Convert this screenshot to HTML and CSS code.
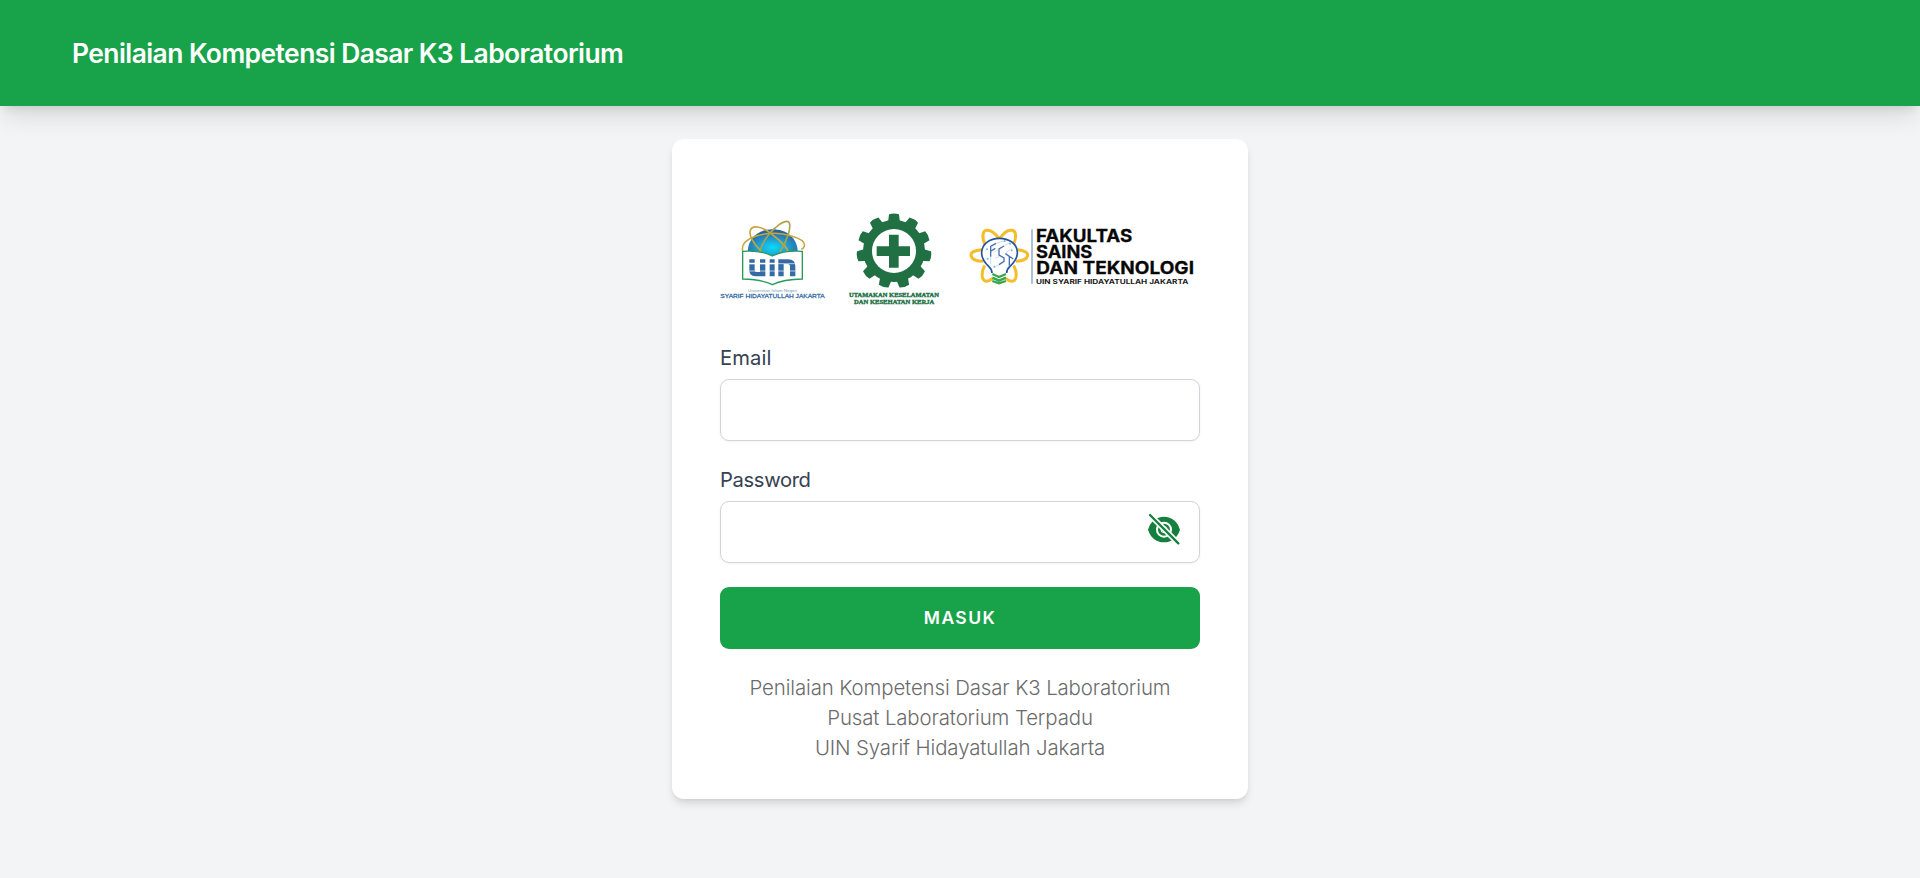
FILE: index.html
```html
<!DOCTYPE html>
<html lang="id">
<head>
<meta charset="utf-8">
<title>Penilaian Kompetensi Dasar K3 Laboratorium</title>
<link rel="stylesheet" href="styles.css">
</head>
<body>
<header class="topbar"><h1 class="brand">Penilaian Kompetensi Dasar K3 Laboratorium</h1></header>
<main class="main">
<form class="card">
<div class="logos">
<svg class="logo logo-sm" viewBox="0 0 375 315">
<defs><radialGradient id="globe" cx="50%" cy="68%" r="60%"><stop offset="0" stop-color="#08dcf8"/><stop offset=".4" stop-color="#1eaadb"/><stop offset="1" stop-color="#2b649d"/></radialGradient></defs>
<path d="M113 140C114 98 148 73 188 73s74 25 75 67l-75 13z" fill="url(#globe)"/>
<g fill="none" stroke="#c6a53c" stroke-width="5">
<path d="M98 139C94 118 105 105 139 93c38-11 72-11 105 0 29 8 42 19 39 31q-2 6-9 9" stroke-width="4.5"/>
<path d="M154 139C130 116 116 91 121 76c6-17 33-13 62 10 29 22 50 45 51 54"/>
<path d="M151 137c4-21 24-51 44-68 20-19 39-25 43-15 5 13-5 52-28 86" stroke="#aaa34b"/>
</g>
<path d="M98 139q55-4 89 14 35-18 90-14v83q-56 1-90 17-34-16-89-17z" fill="#fff" stroke="#259b5d" stroke-width="4"/>
<g fill="#346ba4"><path d="M118 163h16v10h-16zM150 163h16v10h-16zM179 163h15v10h-15zM118 178h16v18q0 5 6 5h10v-23h16v36h-30q-18-1-18-18zM179 178h15v36h-15zM205 163h29q22 1 22 20v31h-16v-30q0-7-7-7h-12v37h-16z"/></g>
<path d="M118 176h138M118 198h138" stroke="#fff" stroke-width="2"/>
<text x="114" y="260" textLength="147" lengthAdjust="spacingAndGlyphs" class="uin-small">Universitas Islam Negeri</text>
<text x="31" y="278" textLength="313" lengthAdjust="spacingAndGlyphs" class="uin-name">SYARIF HIDAYATULLAH JAKARTA</text>
</svg>
<svg class="logo logo-sm" viewBox="0 0 375 315">
<defs><path id="tooth" d="M158 62L162 28q15-5 30 0l4 34z"/></defs>
<g fill="#217044"><circle cx="177" cy="138" r="93"/>
<use href="#tooth"/><use href="#tooth" transform="rotate(32.727 177 138)"/><use href="#tooth" transform="rotate(65.455 177 138)"/><use href="#tooth" transform="rotate(98.182 177 138)"/><use href="#tooth" transform="rotate(130.909 177 138)"/><use href="#tooth" transform="rotate(163.636 177 138)"/><use href="#tooth" transform="rotate(196.364 177 138)"/><use href="#tooth" transform="rotate(229.091 177 138)"/><use href="#tooth" transform="rotate(261.818 177 138)"/><use href="#tooth" transform="rotate(294.545 177 138)"/><use href="#tooth" transform="rotate(327.273 177 138)"/></g>
<circle cx="177" cy="138" r="66" fill="#fff"/>
<path d="M162 89h29v35h34v29h-34v35h-29v-35h-37v-29h37z" fill="#217044"/>
<text x="42" y="276" textLength="270" lengthAdjust="spacingAndGlyphs" class="k3">UTAMAKAN KESELAMATAN</text>
<text x="57" y="297" textLength="241" lengthAdjust="spacingAndGlyphs" class="k3">DAN KESEHATAN KERJA</text>
</svg>
<svg class="logo logo-lg" viewBox="0 -30 720 315">
<g fill="none" stroke="#f4bd2a" stroke-width="9">
<path d="M65 104C43 106 32 112 33 122c2 10 16 17 37 17M172 104c22 2 32 9 31 18-2 10-15 16-35 17"/>
<path d="M75 88C65 67 67 47 80 46c12-1 27 11 38 26 11-16 26-28 38-26 13 2 14 21 5 42"/>
<path d="M74 151c-11 21-10 43 2 47 7 2 15-2 22-8M161 151c11 21 10 43-2 47-7 2-15-2-22-8"/></g>
<path d="M96 174q0-11-10-20c-15-14-22-27-21-43 2-25 24-41 53-41s53 16 54 41c1 16-7 29-22 43q-10 9-10 20" fill="#fff" stroke="#2453a2" stroke-width="5"/>
<path d="M92 125V94l16-9M93 108l13-8M132 93l-15 9v18l15 9v10l-15 10M136 116l24 16M148 124v28" fill="none" stroke="#4a6fae" stroke-width="4"/>
<g stroke="#83bce2" stroke-width="1.5" fill="none"><path d="M92 125v22M108 85l24-7M132 93l17-10M117 102l-11 8M117 149l-14 6M148 152l-10 9M136 116l13-12M106 130l11-6"/></g>
<g fill="#73b8dd"><circle cx="83" cy="131" r="3"/><circle cx="103" cy="155" r="3"/><circle cx="150" cy="86" r="3"/><circle cx="134" cy="78" r="3"/><circle cx="155" cy="106" r="3"/><circle cx="81" cy="103" r="3"/></g>
<path d="M97 177l20 9 21-9M97 188l20 9 21-9M97 198l20 7 21-7" fill="none" stroke="#38a64b" stroke-width="7"/>
<path d="M216 43v163" stroke="#7e9fc8" stroke-width="4"/>
<g class="fst"><text x="228" y="81" textLength="289" lengthAdjust="spacingAndGlyphs">FAKULTAS</text><text x="228" y="129" textLength="169" lengthAdjust="spacingAndGlyphs">SAINS</text><text x="229" y="176" textLength="473" lengthAdjust="spacingAndGlyphs">DAN TEKNOLOGI</text></g>
<text x="228" y="206" textLength="457" lengthAdjust="spacingAndGlyphs" class="fst-sub">UIN SYARIF HIDAYATULLAH JAKARTA</text>
</svg>
</div>
<div class="field"><label class="label label-email" for="email">Email</label><input class="input" id="email" type="email"></div>
<div class="field"><label class="label label-password" for="password">Password</label>
<div class="password"><input class="input" id="password" type="password">
<svg class="eye" viewBox="0 0 108 96"><path d="M6 50C13 26 31 11 54 11s41 15 48 39C95 74 77 88 54 88S13 74 6 50z" fill="#15803d"/><circle cx="54" cy="50" r="21" fill="#15803d" stroke="#fff" stroke-width="6"/><path d="M3 -3l103 103" stroke="#fff" stroke-width="17"/><circle cx="54" cy="50" r="9" fill="none" stroke="#fff" stroke-width="3"/><path d="M12 6l85 85" stroke="#15803d" stroke-width="7" stroke-linecap="round"/></svg></div></div>
<button class="submit" type="button"><span class="submit-text">MASUK</span></button>
<div class="footer"><div class="line-one">Penilaian Kompetensi Dasar K3 Laboratorium</div><div class="line-two">Pusat Laboratorium Terpadu</div><div class="line-three">UIN Syarif Hidayatullah Jakarta</div></div>
</form>
</main>
</body>
</html>
```
FILE: styles.css
```css
*{box-sizing:border-box}
body{margin:0;min-height:878px;background:#f3f4f6;font-family:Inter,"Open Sans",sans-serif}
.topbar{height:106px;padding:0 72px;display:flex;align-items:center;background:#18a34a;box-shadow:0 15px 22px -4px rgba(0,0,0,.1),0 6px 9px -4px rgba(0,0,0,.1)}
.brand{margin:0;color:#fff;font-size:26.4px;font-weight:600;line-height:36px;letter-spacing:-.55px;white-space:nowrap}
.main{display:flex;justify-content:center;padding-top:33px}
.card{width:576px;height:660px;padding:66px 48px 36px;background:#fff;border-radius:12px;box-shadow:0 6px 9px -1px rgba(0,0,0,.1),0 3px 6px -3px rgba(0,0,0,.1)}
.logos{display:flex;margin:0 0 33px -10px;width:490px}
.logo{display:block;height:105px;flex:none}
.logo-sm{width:125px}
.logo-lg{width:240px}
.field{margin-bottom:24px}
.label{display:block;width:max-content;line-height:30px;margin-bottom:6px;font-size:20.2px;font-weight:400;color:#374151}
.label-email{letter-spacing:.1px}
.label-password{letter-spacing:-.35px}
.input{display:block;width:100%;height:62px;padding:12px 18px;border:1px solid #d1d5db;border-radius:9px;background:#fff;box-shadow:0 1px 3px rgba(0,0,0,.05);font:20px Inter,sans-serif;outline:0}
.password{position:relative}
.eye{position:absolute;right:18px;top:12px;width:36px;height:32px}
.submit{display:flex;align-items:center;justify-content:center;width:100%;height:62px;padding:0 0 2px;border:0;border-radius:9px;background:#18a34a;color:#fff;font:600 17.5px Inter,sans-serif;letter-spacing:1.4px}
.footer{margin-top:24px;display:flex;flex-direction:column;align-items:center;font-size:20.4px;font-weight:300;line-height:30px;color:#6b6b6b;letter-spacing:-.11px;white-space:nowrap}
.uin-small{font:12px "Liberation Sans",sans-serif;fill:#7b9abb}
.uin-name{font:18px "Liberation Sans",sans-serif;fill:#346ba4;stroke:#346ba4;stroke-width:.8px}
.k3{font:bold 17px "Liberation Serif",serif;fill:#217044;stroke:#217044;stroke-width:1px}
.fst{font:bold 51px Inter,sans-serif;fill:#080808;stroke:#080808;stroke-width:.8px}
.fst-sub{font:bold 20px Inter,sans-serif;fill:#181818}
```
